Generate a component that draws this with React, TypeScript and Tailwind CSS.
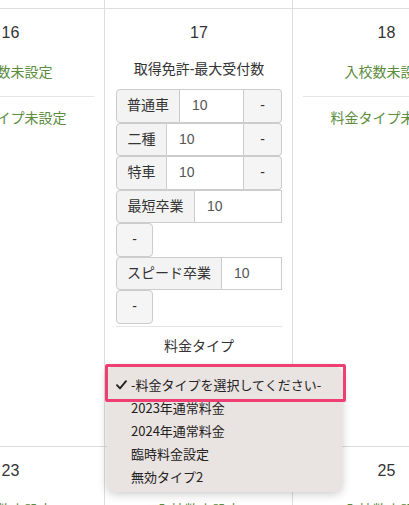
const font = "[font-family:'Liberation_Sans','Noto_Sans_CJK_JP',sans-serif]";

type GroupProps = { label: string; labelW: string; wrap?: boolean };

function LimitGroup({ label, labelW, wrap }: GroupProps) {
  return (
    <div>
      <div className="flex h-[33.5px] text-[14px] text-[#555]">
        <div
          className={`${labelW} shrink-0 flex items-center justify-center bg-[#f3f3f3] border border-[#ccc] rounded-l-[4px] text-[#333]`}
        >
          {label}
        </div>
        <div className="flex-1 flex items-center pl-3 border-y border-r border-[#ccc] bg-white">10</div>
        {!wrap && (
          <div className="w-[38px] shrink-0 flex items-center justify-center bg-[#f5f5f5] border-y border-r border-[#ccc] rounded-r-[4px] text-[#333]">
            -
          </div>
        )}
      </div>
      {wrap && (
        <div className="w-[37px] h-[33.5px] flex items-center justify-center bg-[#f5f5f5] border border-[#ccc] rounded-[4px] text-[14px] text-[#333]">
          -
        </div>
      )}
    </div>
  );
}

function SimpleCell({ day }: { day: number }) {
  return (
    <div className="w-[188px] shrink-0 border-r border-[#ddd] px-[10px] pt-3 text-center">
      <div className="text-[16px] leading-6 text-[#333]">{day}</div>
      <div className="mt-[17px] text-[14px] leading-5 text-[#5a8c3c] whitespace-nowrap">入校数未設定</div>
      <div className="mt-[14px] border-t border-[#e5e5e5]" />
      <div className="mt-[11px] text-[14px] leading-5 text-[#5a8c3c] whitespace-nowrap">料金タイプ未設定</div>
    </div>
  );
}

function OpenCell() {
  return (
    <div className="w-[188px] shrink-0 border-r border-[#ddd] pl-[11px] pr-[10px] pt-3 text-center">
      <div className="text-[16px] leading-6 text-[#333]">17</div>
      <div className="mt-[14px] text-[14px] leading-5 text-[#333]">取得免許-最大受付数</div>
      <div className="mt-[10px] text-left">
        <LimitGroup label="普通車" labelW="w-[64px]" />
        <LimitGroup label="二種" labelW="w-[51px]" />
        <LimitGroup label="特車" labelW="w-[51px]" />
        <LimitGroup label="最短卒業" labelW="w-[79px]" wrap />
        <LimitGroup label="スピード卒業" labelW="w-[106px]" wrap />
      </div>
      <div className="mt-[2px] border-t border-[#e5e5e5]" />
      <div className="mt-[9px] text-[14px] leading-5 text-[#333]">料金タイプ</div>
    </div>
  );
}

const options = ["2023年通常料金", "2024年通常料金", "臨時料金設定", "無効タイプ2"];

export default function App() {
  return (
    <div className={`relative w-[409px] h-[505px] overflow-hidden bg-white ${font}`}>
      <div className="-ml-[83px]">
        <div className="flex h-[8px]">
          <div className="w-[188px] shrink-0 border-r border-[#ddd]" />
          <div className="w-[188px] shrink-0 border-r border-[#ddd]" />
          <div className="w-[188px] shrink-0 border-r border-[#ddd]" />
        </div>
        <div className="flex h-[438px] border-t border-[#ddd]">
          <SimpleCell day={16} />
          <OpenCell />
          <SimpleCell day={18} />
        </div>
        <div className="flex h-[80px] border-t border-[#ddd]">
          <SimpleCell day={23} />
          <SimpleCell day={24} />
          <SimpleCell day={25} />
        </div>
      </div>

      <div className="absolute left-[107px] top-[366px] w-[235px] h-[126px] rounded-[8px] bg-[#e9e3e1] shadow-[0_2px_10px_rgba(0,0,0,0.22)] pt-[7px] [font-family:'Noto_Sans_CJK_JP',sans-serif] text-[13px] text-[#222]">
        <div className="flex items-center h-[23px] pl-[9px] whitespace-nowrap">
          <svg width="11" height="10" viewBox="0 0 11 10" className="mr-[4px] shrink-0">
            <path d="M1 5.2 L4 8.3 L10 1.2" fill="none" stroke="#222" strokeWidth="1.9" strokeLinecap="round" strokeLinejoin="round" />
          </svg>
          <span>-料金タイプを選択してください-</span>
        </div>
        {options.map((o) => (
          <div key={o} className="flex items-center h-[23px] pl-[24px] whitespace-nowrap">
            {o}
          </div>
        ))}
      </div>
      <div className="absolute left-[105px] top-[364px] w-[241px] h-[38px] border-[3px] border-[#ef3f72] rounded-[2px]" />
    </div>
  );
}
